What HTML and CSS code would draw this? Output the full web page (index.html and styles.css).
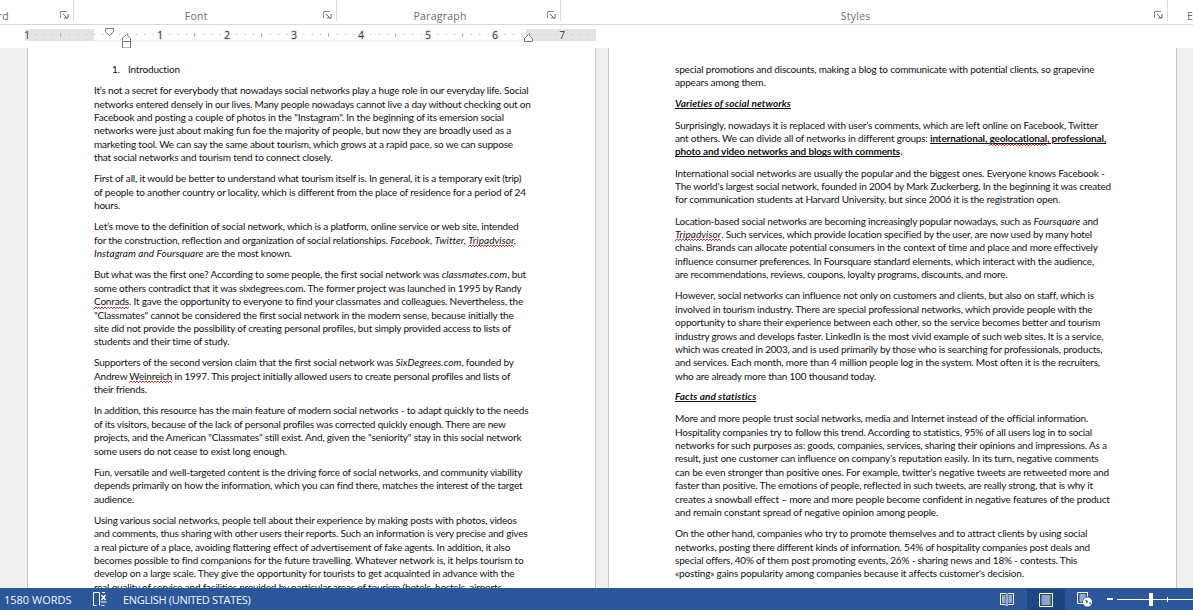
FILE: index.html
```html
<!DOCTYPE html>
<html lang="en">
<head>
<meta charset="utf-8">
<title>Document</title>
<link rel="stylesheet" href="styles.css">
</head>
<body>
<div class="app">
  <header class="ribbon">
    <div class="group group-clip"><span class="label label-clip">Clipboard</span><svg class="launcher" viewBox="0 0 9 9"><path d="M.5 7V.5H7" fill="none" stroke="#8a8a8a"/><path d="M3 3l4 4M4 7h4V3" fill="none" stroke="#666"/></svg></div>
    <div class="group group-font"><span class="label">Font</span><svg class="launcher" viewBox="0 0 9 9"><path d="M.5 7V.5H7" fill="none" stroke="#8a8a8a"/><path d="M3 3l4 4M4 7h4V3" fill="none" stroke="#666"/></svg></div>
    <div class="group group-para"><span class="label">Paragraph</span><svg class="launcher" viewBox="0 0 9 9"><path d="M.5 7V.5H7" fill="none" stroke="#8a8a8a"/><path d="M3 3l4 4M4 7h4V3" fill="none" stroke="#666"/></svg></div>
    <div class="group group-styles"><span class="label">Styles</span><svg class="launcher" viewBox="0 0 9 9"><path d="M.5 7V.5H7" fill="none" stroke="#8a8a8a"/><path d="M3 3l4 4M4 7h4V3" fill="none" stroke="#666"/></svg></div>
    <div class="group-last"><span class="label">E</span></div>
  </header>

  <div class="ruler-row">
    <svg class="ruler" width="1193" height="24" viewBox="0 0 1193 24">
      <defs>
        <pattern id="dots" x="94" y="0" width="8.375" height="24" patternUnits="userSpaceOnUse"><rect x="0" y="10" width="1" height="1" fill="#b4b4b4"/></pattern>
      </defs>
      <rect x="25" y="5" width="69" height="12" fill="#e4e4e4"/>
      <rect x="526" y="5" width="70" height="12" fill="#e4e4e4"/>
      <rect x="94" y="16.5" width="432" height="1" fill="#e4e4e4"/>
      <rect x="25" y="9" width="571" height="4" fill="url(#dots)"/>
      <g stroke="#b4b4b4"><path d="M60.500 9v4M127.500 9v4M194.500 9v4M261.500 9v4M328.500 9v4M395.500 9v4M462.500 9v4M529.500 9v4"/></g>
      <g class="ruler-num">
        <text x="27" y="15">1</text><text x="160" y="15">1</text><text x="227" y="15">2</text><text x="294" y="15">3</text><text x="361" y="15">4</text><text x="428" y="15">5</text><text x="495" y="15">6</text><text x="562" y="15">7</text>
      </g>
      <path d="M105.500 4.500h8v3.500l-4 3.500-4-3.500z" fill="#fff" stroke="#777"/>
      <path d="M122.500 17.500v-3.500l4-3.500 4 3.500v3.500zM122.500 17.500h8v6.500h-8z" fill="#fff" stroke="#777"/>
      <path d="M524.500 17.500v-3l4-4 4 4v3z" fill="#fff" stroke="#777"/>
    </svg>
  </div>

  <main class="workspace">
    <article class="page">
      <div class="intro"><span class="num">1.</span><span>Introduction</span></div>
      <p>It’s not a secret for everybody that nowadays social networks play a huge role in our everyday life. Social<br>networks entered densely in our lives. Many people nowadays cannot live a day without checking out on<br>Facebook and posting a couple of photos in the "Instagram". In the beginning of its emersion social<br>networks were just about making fun foe the majority of people, but now they are broadly used as a<br>marketing tool. We can say the same about tourism, which grows at a rapid pace, so we can suppose<br>that social networks and tourism tend to connect closely.</p>
      <p>First of all, it would be better to understand what tourism itself is. In general, it is a temporary exit (trip)<br>of people to another country or locality, which is different from the place of residence for a period of 24<br>hours.</p>
      <p>Let’s move to the definition of social network, which is a platform, online service or web site, intended<br>for the construction, reflection and organization of social relationships. <em>Facebook, Twitter, <span class="sp">Tripadvisor</span>,<br>Instagram and Foursquare</em> are the most known.</p>
      <p>But what was the first one? According to some people, the first social network was <em>classmates.com</em>, but<br>some others contradict that it was sixdegrees.com. The former project was launched in 1995 by Randy<br><span class="sp">Conrads</span>. It gave the opportunity to everyone to find your classmates and colleagues. Nevertheless, the<br>"Classmates" cannot be considered the first social network in the modern sense, because initially the<br>site did not provide the possibility of creating personal profiles, but simply provided access to lists of<br>students and their time of study.</p>
      <p>Supporters of the second version claim that the first social network was <em>SixDegrees.com</em>, founded by<br>Andrew <span class="sp">Weinreich</span> in 1997. This project initially allowed users to create personal profiles and lists of<br>their friends.</p>
      <p>In addition, this resource has the main feature of modern social networks - to adapt quickly to the needs<br>of its visitors, because of the lack of personal profiles was corrected quickly enough. There are new<br>projects, and the American "Classmates" still exist. And, given the "seniority" stay in this social network<br>some users do not cease to exist long enough.</p>
      <p>Fun, versatile and well-targeted content is the driving force of social networks, and community viability<br>depends primarily on how the information, which you can find there, matches the interest of the target<br>audience.</p>
      <p>Using various social networks, people tell about their experience by making posts with photos, videos<br>and comments, thus sharing with other users their reports. Such an information is very precise and gives<br>a real picture of a place, avoiding flattering effect of advertisement of fake agents. In addition, it also<br>becomes possible to find companions for the future travelling. Whatever network is, it helps tourism to<br>develop on a large scale. They give the opportunity for tourists to get acquainted in advance with the<br>real quality of service and facilities provided by particular areas of tourism (hotels, hostels, airports,</p>
    </article>
    <article class="page">
      <p>special promotions and discounts, making a blog to communicate with potential clients, so grapevine<br>appears among them.</p>
      <p class="heading">Varieties of social networks</p>
      <p>Surprisingly, nowadays it is replaced with user’s comments, which are left online on Facebook, Twitter<br>ant others. We can divide all of networks in different groups: <strong>international, <span class="sp">geolocational</span>, professional,<br>photo and video networks and blogs with comments</strong>.</p>
      <p>International social networks are usually the popular and the biggest ones. Everyone knows Facebook -<br>The world's largest social network, founded in 2004 by Mark Zuckerberg. In the beginning it was created<br>for communication students at Harvard University, but since 2006 it is the registration open.</p>
      <p>Location-based social networks are becoming increasingly popular nowadays, such as <em>Foursquare</em> and<br><em class="sp">Tripadvisor</em>. Such services, which provide location specified by the user, are now used by many hotel<br>chains. Brands can allocate potential consumers in the context of time and place and more effectively<br>influence consumer preferences. In Foursquare standard elements, which interact with the audience,<br>are recommendations, reviews, coupons, loyalty programs, discounts, and more.</p>
      <p>However, social networks can influence not only on customers and clients, but also on staff, which is<br>involved in tourism industry. There are special professional networks, which provide people with the<br>opportunity to share their experience between each other, so the service becomes better and tourism<br>industry grows and develops faster. LinkedIn is the most vivid example of such web sites. It is a service,<br>which was created in 2003, and is used primarily by those who is searching for professionals, products,<br>and services. Each month, more than 4 million people log in the system. Most often it is the recruiters,<br>who are already more than 100 thousand today.</p>
      <p class="heading">Facts and statistics</p>
      <p>More and more people trust social networks, media and Internet instead of the official information.<br>Hospitality companies try to follow this trend. According to statistics, 95% of all users log in to social<br>networks for such purposes as: goods, companies, services, sharing their opinions and impressions. As a<br>result, just one customer can influence on company’s reputation easily. In its turn, negative comments<br>can be even stronger than positive ones. For example, twitter’s negative tweets are retweeted more and<br>faster than positive. The emotions of people, reflected in such tweets, are really strong, that is why it<br>creates a snowball effect – more and more people become confident in negative features of the product<br>and remain constant spread of negative opinion among people.</p>
      <p>On the other hand, companies who try to promote themselves and to attract clients by using social<br>networks, posting there different kinds of information. 54% of hospitality companies post deals and<br>special offers, 40% of them post promoting events, 26% - sharing news and 18% - contests. This<br>«posting» gains popularity among companies because it affects customer's decision.</p>
    </article>
  </main>

  <footer class="status">
    <span class="words">1580 WORDS</span>
    <svg class="proof" width="15" height="16" viewBox="0 0 15 16"><path d="M7.500 1.500H1.500v13h3M7.500 1.500v13" fill="none" stroke="#fff"/><path d="M10 1.500h3M9.500 14.500h3" stroke="#fff"/><path d="M9.500 4l4 5M13.500 4l-4 5" stroke="#fff" stroke-width="1.300" fill="none"/><path d="M8.500 11h6" stroke="#fff"/></svg>
    <span class="lang">ENGLISH (UNITED STATES)</span>
    <div class="views">
      <svg class="view" width="14" height="14" viewBox="0 0 14 14"><path d="M.5 1.500h5.500l1 1 1-1h5.500v11h-5l-1.500 1-1.500-1h-5z" fill="none" stroke="#fff"/><path d="M7 2.500v10M2 4h3.500M2 6h3.500M2 8h3.500M2 10h3.500M8.500 4H12M8.500 6H12M8.500 8H12M8.500 10H12" stroke="#fff"/></svg>
      <div class="view-active"><svg width="14" height="14" viewBox="0 0 14 14"><path d="M.5.500h13v13H.5z" fill="none" stroke="#fff"/><path d="M2.500 3h9M2.500 5h9M2.500 7h9M2.500 9h9M2.500 11h9" stroke="#fff"/></svg></div>
      <svg class="view" width="15" height="15" viewBox="0 0 15 15"><path d="M7.500 11.500H.5V.500h10v4" fill="none" stroke="#fff"/><path d="M2.500 3h6M2.500 5h6M2.500 7h4M2.500 9h3" stroke="#fff"/><circle cx="10.500" cy="10" r="4.500" fill="#fff"/><path d="M8 7.500l3 1.500-1 3zM12 11l2-1-1 3z" fill="#2b579a"/></svg>
    </div>
    <div class="zoom"><span class="minus"></span><div class="track"><span class="mid"></span><span class="thumb"></span></div></div>
  </footer>
</div>
</body>
</html>
```
FILE: styles.css
```css
* { box-sizing: border-box; }
html, body { margin: 0; height: 100%; }
body { overflow: hidden; background: #fff; }
.app { width: 1193px; height: 610px; display: flex; flex-direction: column; overflow: hidden; }

.ribbon { height: 25px; flex: none; display: flex; background: #fff; border-bottom: 1px solid #d8d8d8; font-family: "Open Sans", sans-serif; }
.group { position: relative; height: 21px; padding-right: 17px; border-right: 1px solid #dcdcdc; display: flex; justify-content: center; align-items: flex-end; }
.group-clip { width: 74px; padding-right: 0; justify-content: flex-start; }
.group-font { width: 263px; }
.group-para { width: 225px; }
.group-styles { width: 607px; }
.group-last { flex: 1; height: 21px; display: flex; align-items: flex-end; padding-left: 19px; }
.label { font-size: 10.5px; line-height: 10px; color: #6a6a6a; letter-spacing: .25px; white-space: nowrap; }
.label-clip { margin-left: -41px; }
.launcher { position: absolute; right: 4px; bottom: 1px; width: 9px; height: 9px; }

.ruler-row { height: 23px; flex: none; background: #fff; }
.ruler { display: block; margin-top: -1px; overflow: visible; }
.ruler-num text { font-family: "Open Sans", sans-serif; font-size: 10px; fill: #333; text-anchor: middle; paint-order: stroke; stroke: #e9e9e9; stroke-width: 2px; }

.workspace { flex: 1; min-height: 0; overflow: hidden; display: flex; gap: 12px; padding-left: 27px; background: #f0f0f0; }
.page { width: 569px; flex: none; height: 700px; background: #fff; border-left: 1px solid #c6c6c6; border-right: 1px solid #c6c6c6; padding: 15px 0 0 66px; font-family: Lato, sans-serif; font-size: 10px; letter-spacing: -.19px; line-height: 13.42px; color: #111; white-space: nowrap; }
.page p { margin: 0 0 7.7px; }
.intro { display: flex; margin: 0 0 7.7px; padding-left: 18px; }
.num { width: 16px; }
em { letter-spacing: .05px; }
.sp { padding-bottom: 1.5px; background-image: linear-gradient(90deg, #d9302c 50%, transparent 50%), linear-gradient(90deg, transparent 50%, #d9302c 50%); background-size: 3px 1px; background-repeat: repeat-x; background-position: 0 100%, 0 calc(100% - 1px); }
.page .heading { font-style: italic; font-weight: 700; letter-spacing: .05px; text-decoration: underline; margin-top: -.5px; margin-bottom: 8.2px; }
strong { letter-spacing: -.14px; text-decoration: underline; }

.status { height: 22px; flex: none; display: flex; align-items: center; background: #2b579a; color: #f3f6fb; font-family: "Open Sans", sans-serif; font-size: 11px; white-space: nowrap; }
.words { margin-left: 4px; width: 88px; }
.proof { width: 15px; }
.lang { margin-left: 16px; letter-spacing: -.3px; }
.views { margin-left: auto; display: flex; align-items: center; height: 22px; }
.view-active { width: 38px; height: 21px; margin: 1px 12px 0 13px; background: #1e4680; display: flex; align-items: center; justify-content: center; }
.zoom { display: flex; align-items: center; margin-left: 15px; width: 86px; }
.minus { width: 6px; height: 2px; background: #fff; margin-right: 4px; }
.track { position: relative; flex: 1; height: 1px; background: #fff; }
.thumb { position: absolute; left: 32px; top: -6px; width: 4px; height: 13px; background: #fff; }
.mid { position: absolute; left: 50px; top: -2px; width: 1px; height: 5px; background: #fff; }
```
